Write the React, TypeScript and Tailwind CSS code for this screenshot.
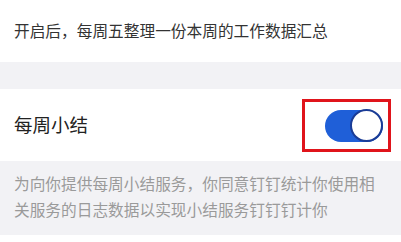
export default function App() {
  const font = { fontFamily: '"Noto Sans CJK SC", "Noto Sans", sans-serif' };
  return (
    <div className="w-[401px] h-[242px] bg-white overflow-hidden" style={font}>
      <div className="h-[62px] flex items-center pl-[14px] text-[15.7px] text-[#333333]">
        开启后，每周五整理一份本周的工作数据汇总
      </div>
      <div className="h-[27px] bg-[#f2f2f5]" />
      <div className="h-[72px] flex items-center justify-between pl-[14px] pr-[10px]">
        <span className="text-[18.5px] text-[#222222]">每周小结</span>
        <div className="border-[3px] border-[#e0141b] pl-[20px] pr-[5px] pt-[8px] pb-[7px]">
          <div className="w-[58px] h-[32px] rounded-full bg-[#1f5fd8] flex items-center justify-end">
            <div className="w-[33px] h-[33px] rounded-full bg-white border-2 border-[#1a3c96]" />
          </div>
        </div>
      </div>
      <div className="h-[74px] bg-[#f2f2f5] pl-[14px] pt-[10px] text-[15.7px] leading-[26px] text-[#9a9a9a]">
        <div>为向你提供每周小结服务，你同意钉钉统计你使用相</div>
        <div>关服务的日志数据以实现小结服务钉钉钉计你</div>
      </div>
    </div>
  );
}
